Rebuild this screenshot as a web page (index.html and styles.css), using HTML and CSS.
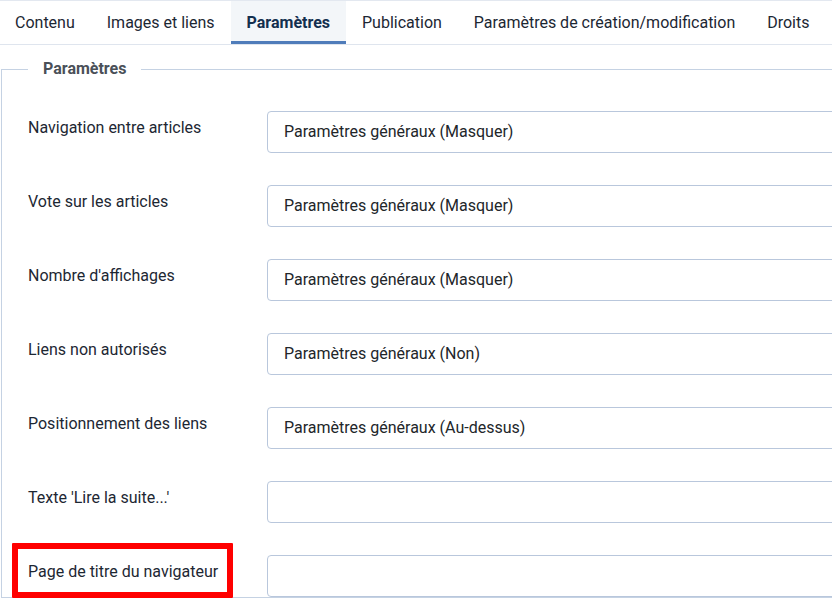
FILE: index.html
```html
<!DOCTYPE html>
<html lang="fr">
<head>
<meta charset="utf-8">
<title>Paramètres</title>
<link rel="stylesheet" href="styles.css">
</head>
<body>
<div class="page">
  <nav class="tabs">
    <div class="tab">Contenu</div>
    <div class="tab">Images et liens</div>
    <div class="tab active">Paramètres</div>
    <div class="tab">Publication</div>
    <div class="tab">Paramètres de création/modification</div>
    <div class="tab">Droits</div>
  </nav>
  <fieldset class="panel">
    <legend class="legend">Paramètres</legend>
    <div class="row">
      <label class="label">Navigation entre articles</label>
      <div class="control">Paramètres généraux (Masquer)</div>
    </div>
    <div class="row">
      <label class="label">Vote sur les articles</label>
      <div class="control">Paramètres généraux (Masquer)</div>
    </div>
    <div class="row">
      <label class="label">Nombre d'affichages</label>
      <div class="control">Paramètres généraux (Masquer)</div>
    </div>
    <div class="row">
      <label class="label">Liens non autorisés</label>
      <div class="control">Paramètres généraux (Non)</div>
    </div>
    <div class="row">
      <label class="label">Positionnement des liens</label>
      <div class="control">Paramètres généraux (Au-dessus)</div>
    </div>
    <div class="row">
      <label class="label">Texte 'Lire la suite...'</label>
      <div class="control"></div>
    </div>
    <div class="row">
      <label class="label highlighted">Page de titre du navigateur<span class="mark"></span></label>
      <div class="control"></div>
    </div>
  </fieldset>
</div>
</body>
</html>
```

FILE: styles.css
```css
html, body {
  margin: 0;
  padding: 0;
  overflow: hidden;
  background: #ffffff;
}
body {
  font-family: Roboto, "Liberation Sans", sans-serif;
  font-size: 16px;
  color: #22262a;
  width: 832px;
  height: 608px;
}
.page {
  width: 832px;
  height: 608px;
  overflow: hidden;
}
.tabs {
  display: flex;
  border-top: 1px solid #e3e8f0;
  border-bottom: 1px solid #dfe5ee;
  height: 43px;
  margin-left: -1px;
}
.tab {
  padding: 3px 16px 0;
  line-height: 37px;
  border-bottom: 3px solid transparent;
  color: #1c2733;
  white-space: nowrap;
}
.tab.active {
  background: #f3f6f9;
  border-bottom-color: #4f7cba;
  color: #132f4f;
  font-weight: 700;
}
.panel {
  margin: 12px 0 0 1px;
  border: 1px solid #c5d2e3;
  border-right: none;
  padding: 0 0 0 26px;
  min-width: 0;
}
.legend {
  padding: 0 15px;
  font-weight: 700;
  color: #4a5058;
  line-height: 24px;
}
.row {
  display: flex;
  align-items: flex-start;
  margin-top: 32px;
}
.row:first-of-type {
  margin-top: 30px;
}
.label {
  width: 239px;
  flex: none;
  padding-top: 5px;
  line-height: 24px;
  color: #1d2733;
  position: relative;
}
.control {
  flex: none;
  width: 640px;
  height: 40px;
  border: 1px solid #b9c7dc;
  border-radius: 4px;
  padding: 0 16px;
  line-height: 40px;
  color: #22262a;
  box-sizing: content-box;
}
.mark {
  position: absolute;
  left: -16px;
  top: -12px;
  width: 209px;
  height: 43px;
  border: 6.5px solid #ff0000;
  border-radius: 1px;
}
```
